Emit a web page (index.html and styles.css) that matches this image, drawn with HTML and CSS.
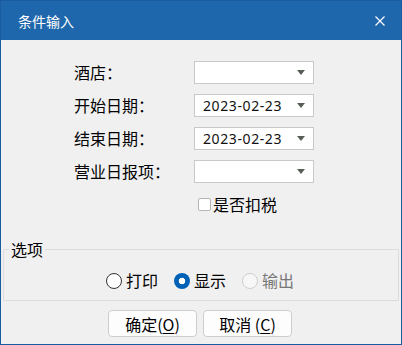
FILE: index.html
```html
<!DOCTYPE html>
<html lang="zh-CN">
<head>
  <meta charset="UTF-8">
  <meta name="viewport" content="width=device-width, initial-scale=1.0">
  <title>条件输入</title>
  <link rel="stylesheet" href="styles.css">
</head>
<body>

  <div class="window">
    <!-- Title bar -->
    <div class="title-bar">
      <span class="title">条件输入</span>
      <svg class="close" width="10" height="10" viewBox="0 0 10 10">
        <path d="M0.5 0.5 L9.5 9.5 M9.5 0.5 L0.5 9.5" stroke="#fff" stroke-width="1.2" fill="none"/>
      </svg>
    </div>

    <div class="content">
      <!-- Query fields -->
      <div class="form">
        <label class="label">酒店：</label>
        <div class="combo"><span class="value"></span><span class="arrow"></span></div>

        <label class="label">开始日期：</label>
        <div class="combo"><span class="value">2023-02-23</span><span class="arrow"></span></div>

        <label class="label">结束日期：</label>
        <div class="combo"><span class="value">2023-02-23</span><span class="arrow"></span></div>

        <label class="label">营业日报项：</label>
        <div class="combo"><span class="value"></span><span class="arrow"></span></div>

        <div class="check-row">
          <span class="checkbox"></span>
          <span>是否扣税</span>
        </div>
      </div>

      <!-- Output options -->
      <fieldset class="options">
        <legend>选项</legend>
        <div class="radio-row">
          <span class="radio-item"><span class="radio"></span>打印</span>
          <span class="radio-item"><span class="radio checked"></span>显示</span>
          <span class="radio-item disabled"><span class="radio"></span>输出</span>
        </div>
      </fieldset>

      <div class="buttons">
        <button class="btn">确定(<u>O</u>)</button>
        <button class="btn">取消 (<u>C</u>)</button>
      </div>
    </div>
  </div>

</body>
</html>
```

FILE: styles.css
```css
body {
  margin: 0;
  background-color: #f0f0f0;
  font-family: "Noto Sans CJK SC", "Noto Sans", sans-serif;
  color: #000;
}

.window {
  width: 402px;
  height: 345px;
  box-sizing: border-box;
  border: 1px solid #1b5c9e;
  display: flex;
  flex-direction: column;
  background-color: #f0f0f0;
}

.title-bar {
  height: 39px;
  flex-shrink: 0;
  background-color: #1f67ad;
  display: flex;
  align-items: center;
  justify-content: space-between;
  padding: 1px 16px 0 17px;
  box-sizing: border-box;
}

.title {
  color: #fff;
  font-size: 14px;
  line-height: 16px;
}

.close {
  display: block;
}

.content {
  flex: 1;
  display: flex;
  flex-direction: column;
}

/* label + combo grid */
.form {
  display: grid;
  grid-template-columns: 120px 120px;
  row-gap: 10px;
  margin: 21px 0 0 73px;
  align-items: center;
}

.label {
  font-size: 16px;
  line-height: 23px;
}

.combo {
  height: 23px;
  box-sizing: border-box;
  border: 1px solid #c9c9c9;
  background-color: #fff;
  display: flex;
  align-items: center;
  justify-content: space-between;
  padding: 0 8px;
}

.combo .value {
  font-family: "Noto Sans", sans-serif;
  font-size: 14px;
  letter-spacing: 0.6px;
  color: #111;
}

.combo .arrow {
  width: 0;
  height: 0;
  border-left: 4.5px solid transparent;
  border-right: 4.5px solid transparent;
  border-top: 5px solid #565e56;
}

.check-row {
  grid-column: 2;
  display: flex;
  align-items: center;
  gap: 2px;
  padding-left: 4px;
  margin-top: 2px;
  font-size: 16px;
  line-height: 18px;
}

.checkbox {
  width: 13px;
  height: 13px;
  box-sizing: border-box;
  border: 1px solid #b5b5b5;
  border-radius: 2px;
  background-color: #fff;
  margin-top: 1px;
}

.options {
  margin: 28px 2px 0 2px;
  padding: 15px 5px 11px 5px;
  border: 1px solid #dcdcdc;
  border-radius: 1px;
}

.options legend {
  font-size: 16px;
  line-height: 16px;
  padding: 0 2px;
}

.radio-row {
  display: flex;
  justify-content: center;
  gap: 16px;
  font-size: 16px;
  line-height: 17px;
  padding-right: 2px;
}

.radio-item {
  display: flex;
  align-items: center;
  gap: 4px;
}

.radio {
  width: 16px;
  height: 16px;
  box-sizing: border-box;
  border: 1px solid #333;
  border-radius: 50%;
  background-color: #fff;
}

.radio.checked {
  border: none;
  background: radial-gradient(circle, #fff 0, #fff 3px, #0062b6 3.6px);
}

.radio-item.disabled {
  color: #777;
}

.radio-item.disabled .radio {
  border-color: #cfcfcf;
  background-color: #f7f7f7;
}

.buttons {
  display: flex;
  justify-content: center;
  gap: 6px;
  margin-top: 9px;
  padding-right: 2px;
}

.btn {
  width: 89px;
  height: 27px;
  box-sizing: border-box;
  border: 1px solid #cdcdcd;
  border-radius: 4px;
  background-color: #fdfdfd;
  font-family: "Noto Sans CJK SC", "Noto Sans", sans-serif;
  font-size: 16px;
  line-height: 20px;
  padding: 0;
  color: #000;
}

.btn u {
  text-underline-offset: 2px;
}
```
